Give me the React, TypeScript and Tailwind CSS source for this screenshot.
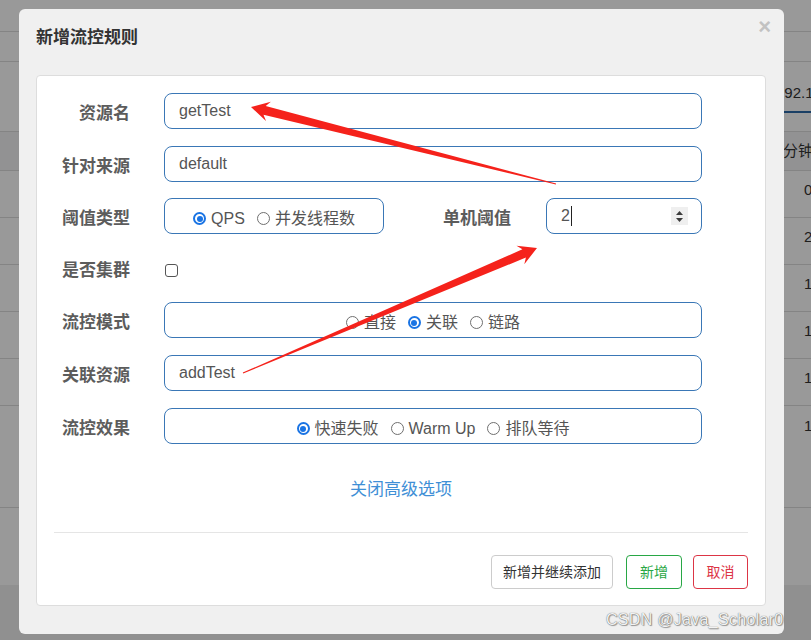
import React from 'react';

type Pt = [number, number];

// tapered annotation arrow: thick head at tip, thin tail
function arrowPoints(tip: Pt, tail: Pt) {
  const dx = tail[0] - tip[0];
  const dy = tail[1] - tip[1];
  const len = Math.hypot(dx, dy);
  const u: Pt = [dx / len, dy / len];
  const n: Pt = [-u[1], u[0]];
  const at = (a: number, b: number): string =>
    `${(tip[0] + u[0] * a + n[0] * b).toFixed(1)},${(tip[1] + u[1] * a + n[1] * b).toFixed(1)}`;
  return [
    at(0, 0),
    at(18, -10),
    at(14, -4.5),
    at(len, -0.4),
    at(len, 0.4),
    at(14, 4.5),
    at(18, 10),
  ].join(' ');
}

const Radio = ({ checked, label }: { checked?: boolean; label: string }) => (
  <span className="flex items-center">
    {checked ? (
      <span className="flex h-[13px] w-[13px] items-center justify-center rounded-full border-2 border-[#1a74e4] bg-white">
        <span className="h-[6px] w-[6px] rounded-full bg-[#1a74e4]" />
      </span>
    ) : (
      <span className="h-[13px] w-[13px] rounded-full border border-[#6f6f6f] bg-white" />
    )}
    <span className="ml-[5px]">{label}</span>
  </span>
);

const Label = ({ children }: { children: React.ReactNode }) => (
  <div className="mt-[5px] w-[93px] text-right text-[17px] font-bold leading-6 text-[#5c5c5c]">{children}</div>
);

const TextBox = ({ value }: { value: string }) => (
  <div className="ml-[34px] flex h-full w-[538px] items-center rounded-lg border border-[#3a77b6] pl-[14px] text-[16px] text-[#555]">
    {value}
  </div>
);

const RadioBox = ({ children, className }: { children: React.ReactNode; className: string }) => (
  <div className={className}>
    <div className="flex items-center gap-3 pt-[5px] text-[16px] text-[#555]">{children}</div>
  </div>
);

export default function App() {
  return (
    <div className="relative h-[640px] w-[811px] overflow-hidden bg-white font-['Liberation_Sans','Noto_Sans_CJK_SC',sans-serif]">
      {/* page behind the dialog */}
      <div className="h-[32px] border-b border-[#dddddd]" />
      <div className="h-[30px] border-b border-[#dddddd]" />
      <div className="flex h-[70px] items-start whitespace-nowrap border-b border-[#dddddd] pl-[776px] pt-[21px]">
        <span className="border-b-2 border-[#2c6aa8] pb-[8px] text-[15px] leading-[20px] text-[#333]">192.168.1.1</span>
      </div>
      <div className="flex h-[39px] items-center whitespace-nowrap border-b border-[#dddddd] bg-[#f3f4f6] pl-[768px] text-[15px] text-[#333]">
        每分钟通过
      </div>
      {['0', '2', '1', '1', '1'].map((v, i) => (
        <div key={i} className="flex h-[47px] items-center border-b border-[#dddddd] pb-[8px] pl-[804px] text-[15px] text-[#333]">
          {v}
        </div>
      ))}
      <div className="h-[102px] border-b border-[#dddddd] pl-[804px] pt-[9px] text-[15px] text-[#333]">1</div>
      <div className="h-[77px]" />
      <div className="h-[60px] bg-[#f0f0f0]" />

      <div className="absolute inset-0 bg-black/40" />

      {/* dialog */}
      <div className="absolute left-[19px] top-[9px] h-[625px] w-[765px] rounded-md bg-[#f0f0f0]">
        <div className="flex h-[66px] items-start justify-between">
          <div className="pl-[17px] pt-[17px] text-[17px] font-bold leading-6 text-[#333]">新增流控规则</div>
          <div className="pr-[13px] pt-[6px] text-[22px] font-bold leading-[24px] text-[#c2c2c2]">×</div>
        </div>

        <div className="ml-[17px] h-[531px] w-[730px] rounded-[4px] border border-[#dddddd] bg-white pt-[17px]">
          <div className="flex h-[36px] items-center">
            <Label>资源名</Label>
            <TextBox value="getTest" />
          </div>
          <div className="mt-[17px] flex h-[36px] items-center">
            <Label>针对来源</Label>
            <TextBox value="default" />
          </div>
          <div className="mt-[16px] flex h-[36px] items-center">
            <Label>阈值类型</Label>
            <div className="ml-[34px] flex h-full w-[538px] items-center">
              <RadioBox className="flex h-full w-[220px] items-center justify-center rounded-lg border border-[#3a77b6]">
                <Radio checked label="QPS" />
                <Radio label="并发线程数" />
              </RadioBox>
              <div className="mt-[5px] flex-1 text-right text-[17px] font-bold leading-6 text-[#5c5c5c]">单机阈值</div>
              <div className="ml-[35px] flex h-full w-[156px] items-center rounded-lg border border-[#3a77b6] pl-[14px] pr-[13px] text-[16px] text-[#555]">
                <span>2</span>
                <span className="ml-px h-[20px] w-px bg-[#222]" />
                <div className="ml-auto flex h-[18px] w-[17px] flex-col items-center justify-center gap-[3px] bg-[#efefef]">
                  <svg width="7" height="4" viewBox="0 0 7 4">
                    <path d="M3.5 0 L7 4 L0 4 Z" fill="#3c3c3c" />
                  </svg>
                  <svg width="7" height="4" viewBox="0 0 7 4">
                    <path d="M0 0 L7 0 L3.5 4 Z" fill="#3c3c3c" />
                  </svg>
                </div>
              </div>
            </div>
          </div>
          <div className="mt-[16px] flex h-[36px] items-center">
            <Label>是否集群</Label>
            <span className="ml-[35px] mt-[5px] h-[13px] w-[13px] rounded-[3px] border border-[#555] bg-white" />
          </div>
          <div className="mt-[16px] flex h-[36px] items-center">
            <Label>流控模式</Label>
            <RadioBox className="ml-[34px] flex h-full w-[538px] items-center justify-center rounded-lg border border-[#3a77b6]">
              <Radio label="直接" />
              <Radio checked label="关联" />
              <Radio label="链路" />
            </RadioBox>
          </div>
          <div className="mt-[17px] flex h-[36px] items-center">
            <Label>关联资源</Label>
            <TextBox value="addTest" />
          </div>
          <div className="mt-[17px] flex h-[36px] items-center">
            <Label>流控效果</Label>
            <RadioBox className="ml-[34px] flex h-full w-[538px] items-center justify-center rounded-lg border border-[#3a77b6]">
              <Radio checked label="快速失败" />
              <Radio label="Warm Up" />
              <Radio label="排队等待" />
            </RadioBox>
          </div>

          <div className="mt-[34px] text-center text-[17px] leading-6 text-[#3f8fd6]">关闭高级选项</div>

          <div className="mx-[17px] mt-[30px] h-px bg-[#e5e5e5]" />

          <div className="mt-[22px] flex justify-end pr-[17px] text-[14px]">
            <button className="h-[34px] w-[122px] rounded-[4px] border border-[#cccccc] bg-white text-[#333]">新增并继续添加</button>
            <button className="ml-[13px] h-[34px] w-[56px] rounded-[4px] border border-[#28a745] bg-white text-[#28a745]">新增</button>
            <button className="ml-[11px] h-[34px] w-[55px] rounded-[4px] border border-[#dc3545] bg-white text-[#dc3545]">取消</button>
          </div>
        </div>
      </div>

      {/* red annotation arrows */}
      <svg className="pointer-events-none absolute inset-0" width="811" height="640" viewBox="0 0 811 640">
        <polygon points={arrowPoints([251, 107], [556, 184])} fill="#f5221b" />
        <polygon points={arrowPoints([537, 248], [243, 373])} fill="#f5221b" />
      </svg>

      <div className="absolute left-[606px] top-[610px] whitespace-nowrap text-[16px] leading-5 tracking-[0.3px] text-[#f2f2f2] [text-shadow:0_0_1px_#444,1px_1px_1px_rgba(0,0,0,0.35)]">
        CSDN @Java_Scholar0
      </div>
    </div>
  );
}
